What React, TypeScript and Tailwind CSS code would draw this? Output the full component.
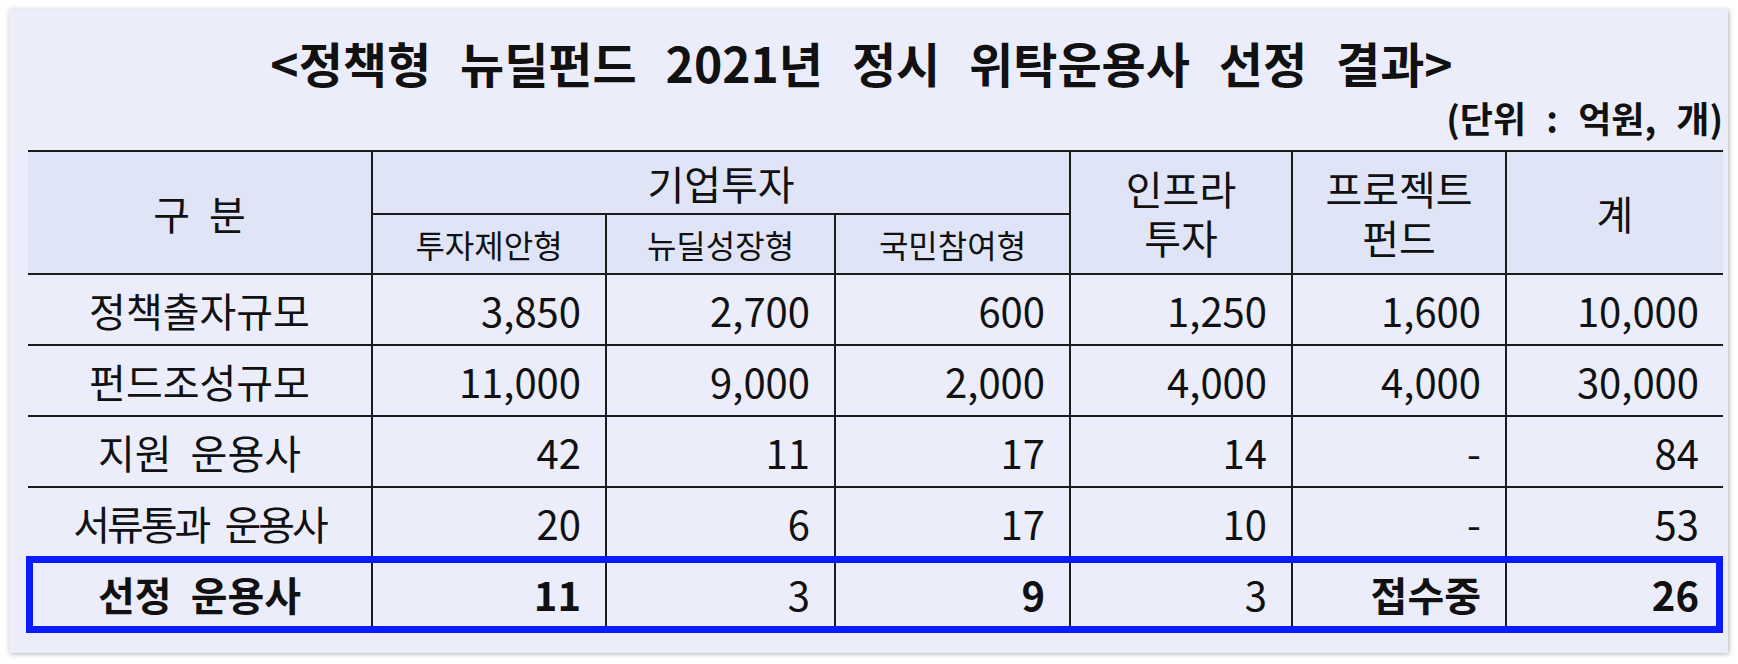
import React from "react";

const FONT = "font-['Noto_Sans_CJK_KR','Noto_Sans',sans-serif]";

type Row = { label: string; labelClass?: string; values: { v: string; bold?: boolean }[]; bold?: boolean };

const rows: Row[] = [
  { label: "정책출자규모", values: ["3,850", "2,700", "600", "1,250", "1,600", "10,000"].map((v) => ({ v })) },
  { label: "펀드조성규모", values: ["11,000", "9,000", "2,000", "4,000", "4,000", "30,000"].map((v) => ({ v })) },
  { label: "지원 운용사", values: ["42", "11", "17", "14", "-", "84"].map((v) => ({ v })) },
  {
    label: "서류통과 운용사",
    labelClass: "tracking-[-3px]",
    values: ["20", "6", "17", "10", "-", "53"].map((v) => ({ v })),
  },
  {
    label: "선정 운용사",
    bold: true,
    values: [
      { v: "11", bold: true },
      { v: "3" },
      { v: "9", bold: true },
      { v: "3" },
      { v: "접수중", bold: true },
      { v: "26", bold: true },
    ],
  },
];

const B = "border-[#1c1c1c]";

export default function App() {
  return (
    <div className={`w-[1738px] h-[664px] bg-white pt-[9px] pl-[9px] text-[#111] ${FONT}`}>
      <div className="w-[1719px] h-[644px] bg-[#ecedfa] shadow-[1px_1px_5px_rgba(0,0,0,0.3)] pl-[19px] pr-[5px] pt-[29px]">
        <div className="text-center text-[48px] leading-[48px] font-bold [word-spacing:18px] pr-[28px]">
          &lt;정책형 뉴딜펀드 2021년 정시 위탁운용사 선정 결과&gt;
        </div>
        <div className="mt-[13px] text-right text-[36px] leading-[36px] font-bold [word-spacing:12px]">
          (단위 : 억원, 개)
        </div>
        <div className="relative mt-[15px]">
          <div
            className={`grid grid-cols-[345px_234px_229px_235px_222px_214px_216px] grid-rows-[63px_60px_71px_71px_71px_71px_71px] border-t-2 ${B}`}
          >
            <div className={`row-span-2 bg-[#dfe4f6] border-b-2 border-r-2 ${B} flex items-center justify-center text-[40px] leading-[48px] [word-spacing:10px]`}>
              구 분
            </div>
            <div className={`col-span-3 bg-[#dfe4f6] border-b-2 border-r-2 ${B} flex items-center justify-center text-[40px] leading-[48px]`}>
              기업투자
            </div>
            <div className={`row-span-2 bg-[#dfe4f6] border-b-2 border-r-2 ${B} flex flex-col items-center justify-center text-center text-[40px] leading-[48px] gap-[1px]`}>
              <span>인프라</span>
              <span>투자</span>
            </div>
            <div className={`row-span-2 bg-[#dfe4f6] border-b-2 border-r-2 ${B} flex flex-col items-center justify-center text-center text-[40px] leading-[48px] gap-[1px]`}>
              <span>프로젝트</span>
              <span>펀드</span>
            </div>
            <div className={`row-span-2 bg-[#dfe4f6] border-b-2 ${B} flex items-center justify-center text-[40px] leading-[48px]`}>
              계
            </div>
            {["투자제안형", "뉴딜성장형", "국민참여형"].map((t) => (
              <div
                key={t}
                className={`bg-[#dfe4f6] border-b-2 border-r-2 ${B} flex items-center justify-center text-[32px] leading-[40px]`}
              >
                {t}
              </div>
            ))}
            {rows.map((r) => (
              <React.Fragment key={r.label}>
                <div
                  className={`border-b-2 border-r-2 ${B} flex items-center justify-center text-[40px] leading-[48px] [word-spacing:10px] ${
                    r.bold ? "font-bold" : ""
                  } ${r.labelClass ?? ""}`}
                >
                  {r.label}
                </div>
                {r.values.map((c, i) => (
                  <div
                    key={i}
                    className={`border-b-2 ${i < 5 ? "border-r-2" : ""} ${B} flex items-center justify-end pr-[24px] text-[40px] leading-[48px] ${
                      c.bold ? "font-bold" : ""
                    }`}
                  >
                    {c.v}
                  </div>
                ))}
              </React.Fragment>
            ))}
          </div>
          <div className="absolute left-[-2px] top-[406px] w-[1697px] h-[77px] border-[7px] border-[#0a1cff]" />
        </div>
      </div>
    </div>
  );
}
